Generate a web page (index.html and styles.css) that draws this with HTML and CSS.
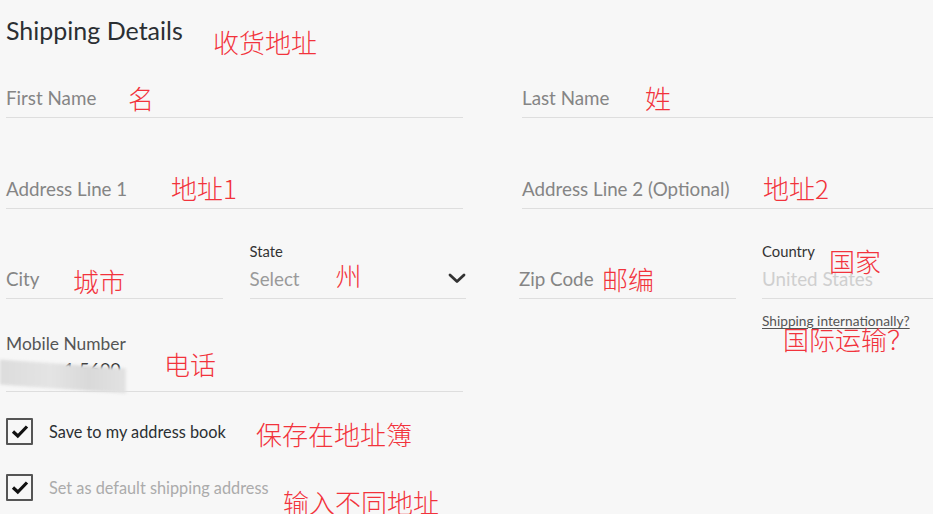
FILE: index.html
```html
<!DOCTYPE html>
<html lang="en">
<head>
    <meta charset="UTF-8">
    <meta name="viewport" content="width=device-width, initial-scale=1.0">
    <title>Shipping Details</title>
    <link rel="stylesheet" href="styles.css">
</head>
<body>
    <div class="form">
        <h2 class="title">Shipping Details<span class="note note-title">收货地址</span></h2>

        <div class="row">
            <div class="field">
                <span class="ph">First Name</span>
                <span class="note note-first">名</span>
            </div>
            <div class="field">
                <span class="ph">Last Name</span>
                <span class="note note-last">姓</span>
            </div>
        </div>

        <div class="row row-addr">
            <div class="field">
                <span class="ph">Address Line 1</span>
                <span class="note note-addr1">地址1</span>
            </div>
            <div class="field">
                <span class="ph">Address Line 2 (Optional)</span>
                <span class="note note-addr2">地址2</span>
            </div>
        </div>

        <div class="row-city">
            <div class="half">
                <div class="group">
                    <div class="field">
                        <span class="ph">City</span>
                        <span class="note note-city">城市</span>
                    </div>
                </div>
                <div class="group">
                    <div class="label">State</div>
                    <div class="field select">
                        <span class="ph">Select</span>
                        <svg class="chev" width="18" height="11" viewBox="0 0 18 11"><polyline points="2,2 9,8.5 16,2" fill="none" stroke="#333" stroke-width="2.8" stroke-linecap="round" stroke-linejoin="round"/></svg>
                        <span class="note note-state">州</span>
                    </div>
                </div>
            </div>
            <div class="half half-right">
                <div class="group">
                    <div class="field">
                        <span class="ph">Zip Code</span>
                        <span class="note note-zip">邮编</span>
                    </div>
                </div>
                <div class="group">
                    <div class="label">Country<span class="note note-country">国家</span></div>
                    <div class="field">
                        <span class="ph light">United States</span>
                    </div>
                    <a class="intl">Shipping internationally?</a>
                    <span class="note note-intl">国际运输？</span>
                </div>
            </div>
        </div>

        <div class="row row-mobile">
            <div class="group">
                <div class="label label-big">Mobile Number</div>
                <div class="field">
                    <span class="phone">1 5600</span>
                    <span class="blur"></span>
                    <span class="note note-phone">电话</span>
                </div>
            </div>
        </div>

        <label class="check">
            <span class="box"><svg width="18" height="15" viewBox="0 0 18 15"><polyline points="2,7.5 6.8,12 16,2.5" fill="none" stroke="#111" stroke-width="3.2"/></svg></span>
            <span class="check-text">Save to my address book</span>
            <span class="note note-save">保存在地址簿</span>
        </label>
        <label class="check check-second">
            <span class="box"><svg width="18" height="15" viewBox="0 0 18 15"><polyline points="2,7.5 6.8,12 16,2.5" fill="none" stroke="#111" stroke-width="3.2"/></svg></span>
            <span class="check-text muted">Set as default shipping address</span>
            <span class="note note-other">输入不同地址</span>
        </label>
    </div>
</body>
</html>
```

FILE: styles.css
```css
*{padding:0; margin:0; box-sizing:border-box;}
html,body{width:100%; height:100%; overflow:hidden;}
body{
    background:#f7f7f7;
    font-family:Lato, "Open Sans", sans-serif;
    color:#333;
}

.form{
    width:980px;
    padding-left:6px;
}

/* annotations drawn over the screenshot */
.note{
    position:absolute;
    font-family:"Noto Sans CJK SC", sans-serif;
    font-weight:300;
    font-size:26px;
    line-height:1;
    color:#f2333c;
    white-space:nowrap;
}

.title{
    position:relative;
    font-size:25px; font-weight:400;
    line-height:28px;
    padding-top:16px;
    color:#2b2f33;
}
.note-title{left:207px; top:29px;}

.row{
    display:grid;
    grid-template-columns:457px 457px;
    column-gap:59px;
    margin-top:35px;
}
.row-addr{margin-top:52px;}

.field{
    position:relative;
    height:39px;
    border-bottom:1px solid #dedede;
    display:flex; align-items:center;
}
.ph{
    font-size:18.8px;
    color:#858585;
    margin-top:-2px;
}
.ph.light{color:#cfcfcf;}
.select .ph{color:#9a9a9a;}
.chev{position:absolute; right:0; top:13px;}

.label{
    position:relative;
    font-size:14.8px;
    line-height:18px;
    color:#333;
}
.label-big{font-size:17.4px; color:#555;}

.row-city{
    display:flex;
    gap:53px;
    margin-top:33px;
    height:88px;
}
.half{
    width:460px;
    display:grid;
    grid-template-columns:1fr 1fr;
    column-gap:27px;
    align-items:start;
}
.half-right{column-gap:26px;}
.half .group:first-child{padding-top:18px;}
.group{position:relative;}

.intl{
    display:block;
    margin-top:13px;
    font-size:13.7px;
    color:#555;
    text-decoration:underline;
    text-underline-offset:2px;
}

.note-first{left:122px; top:6px;}
.note-last{left:123px; top:6px;}
.note-addr1{left:165px; top:5px;}
.note-addr2{left:241px; top:5px;}
.note-city{left:67px; top:8px;}
.note-state{left:86px; top:2px;}
.note-zip{left:83px; top:6px;}
.note-country{left:67px; top:6px;}
.note-intl{left:21px; top:84px;}

.row-mobile{margin-top:5px;}
.phone{
    font-size:18px; color:#333;
    padding-left:58px;
    margin-top:-6px;
}
.blur{
    position:absolute;
    left:-6px; top:11px;
    width:126px; height:25px;
    background:linear-gradient(90deg,#dcdcdc,#e4e4e4 40%,#d9d9d9 70%,#e2e2e2);
    filter:blur(1.5px);
    transform:skewY(4deg);
}
.note-phone{left:158px; top:-2px;}

.check{
    position:relative;
    display:flex; align-items:center;
    margin-top:26px;
    height:27px;
}
.check-second{margin-top:29px;}
.box{
    width:27px; height:27px;
    border:2px solid #555;
    border-radius:1px;
    display:flex; align-items:center; justify-content:center;
}
.check-text{
    margin-left:16px;
    font-size:16.3px;
    color:#2b2f33;
}
.check-text.muted{color:#ababab;}
.note-save{left:250px; top:3px;}
.note-other{left:277px; top:15px;}
```
